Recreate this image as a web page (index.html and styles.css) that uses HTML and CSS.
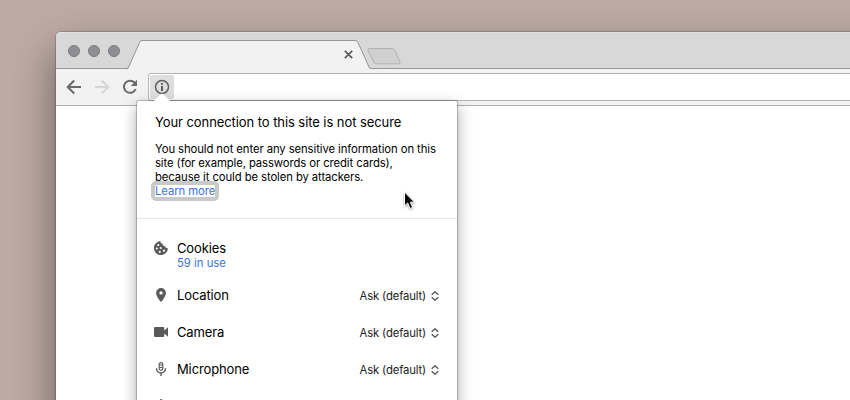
FILE: index.html
```html
<!DOCTYPE html>
<html lang="en">

<head>
    <meta charset="UTF-8">
    <meta name="viewport" content="width=device-width, initial-scale=1.0">
    <title>Site information</title>
    <link rel="stylesheet" href="styles.css">
</head>

<body>
    <div class="browser">
        <!-- Tab strip -->
        <header class="tab-strip">
            <div class="window-buttons">
                <span></span>
                <span></span>
                <span></span>
            </div>
            <div class="tab">
                <svg class="tab-shape" width="244" height="29" viewBox="0 0 244 29">
                    <path d="M0.5 29 L1.5 28.5 L12.6 2.5 Q13.3 0.5 15 0.5 H228 Q230 0.5 231 2.5 L242 27 Q242.5 28.5 244 28.5 V29 Z" fill="#f2f2f2"/>
                    <path d="M0 28.5 Q1 28.5 1.6 27 L12.6 2.5 Q13.3 0.5 15 0.5 H228 Q230 0.5 231 2.5 L242 27 Q242.5 28.5 244 28.5" fill="none" stroke="#969698"/>
                </svg>
                <svg class="tab-close" width="9" height="9" viewBox="0 0 9 9">
                    <path d="M0.8 0.8 L8.2 8.2 M8.2 0.8 L0.8 8.2" stroke="#5a5a5a" stroke-width="1.7"/>
                </svg>
            </div>
            <svg class="new-tab" width="34" height="17" viewBox="0 0 34 17">
                <path d="M2.5 0.5 H25 Q27 0.5 27.8 2 L33 14 Q33.6 15.8 32 15.8 H9.5 Q7.5 15.8 6.7 14 L1 2.3 Q0.4 0.5 2.5 0.5 Z" fill="#d0d0d0" stroke="#b2b2b2"/>
            </svg>
        </header>

        <!-- Toolbar -->
        <nav class="toolbar">
            <svg class="icon-back" width="16" height="16" viewBox="0 0 16 16">
                <path d="M15 8 H2 M8.2 1.5 L1.7 8 L8.2 14.5" fill="none" stroke="#6a6a6a" stroke-width="2"/>
            </svg>
            <svg class="icon-forward" width="16" height="16" viewBox="0 0 16 16">
                <path d="M1 8 H14 M7.8 1.5 L14.3 8 L7.8 14.5" fill="none" stroke="#d6d6d6" stroke-width="2"/>
            </svg>
            <svg class="icon-reload" width="16" height="16" viewBox="0 0 16 16">
                <path d="M12.6 3.7 A6.1 6.1 0 1 0 13.7 10" fill="none" stroke="#6a6a6a" stroke-width="2"/>
                <path d="M15 0.8 V7 H8.8 Z" fill="#6a6a6a"/>
            </svg>
            <div class="omnibox">
                <div class="info-button">
                    <svg width="16" height="16" viewBox="0 0 16 16">
                        <circle cx="8" cy="8" r="6.5" fill="none" stroke="#606060" stroke-width="1.5"/>
                        <path d="M8 7 V12 M8 4 V5.7" stroke="#505050" stroke-width="1.8"/>
                    </svg>
                </div>
            </div>
        </nav>

        <main class="page"></main>
    </div>

    <!-- Site info popup -->
    <section class="popup">
        <svg class="popup-arrow" width="18" height="9" viewBox="0 0 18 9">
            <path d="M0 9 L8 1 Q9 0 10 1 L18 9 Z" fill="#fff"/>
        </svg>
        <div class="summary">
            <h1>Your connection to this site is not secure</h1>
            <p>You should not enter any sensitive information on this<br>
                site (for example, passwords or credit cards),<br>
                because it could be stolen by attackers.</p>
            <a href="#" class="learn-more">Learn more</a>
        </div>
        <ul class="permissions">
            <li class="cookies">
                <svg class="perm-icon" width="14" height="14" viewBox="0 0 14 14">
                    <path d="M6.3 0.1 A7 7 0 1 0 13.9 7.2 C12.7 7.5 11.4 6.8 11.2 5.3 C9.6 5.5 8.4 4.3 8.7 2.9 C7.2 2.8 6.3 1.5 6.3 0.1 Z" fill="#5a5a5a"/>
                    <circle cx="4.3" cy="4" r="1.1" fill="#fff"/>
                    <circle cx="2.8" cy="7.6" r="1" fill="#fff"/>
                    <circle cx="6.7" cy="7" r="1" fill="#fff"/>
                    <circle cx="5.8" cy="10.8" r="1.1" fill="#fff"/>
                    <circle cx="10" cy="9.7" r="1.1" fill="#fff"/>
                </svg>
                <div class="perm-text">
                    <span class="perm-name">Cookies</span>
                    <a href="#" class="in-use">59 in use</a>
                </div>
            </li>
            <li>
                <svg class="perm-icon" width="14" height="14" viewBox="0 0 14 14">
                    <path d="M7 0 A4.9 4.9 0 0 0 2.1 4.9 C2.1 8.5 7 14 7 14 C7 14 11.9 8.5 11.9 4.9 A4.9 4.9 0 0 0 7 0 Z M7 3.2 A1.7 1.7 0 1 1 7 6.6 A1.7 1.7 0 1 1 7 3.2 Z" fill="#5a5a5a" fill-rule="evenodd"/>
                </svg>
                <span class="perm-name">Location</span>
                <div class="perm-value">
                    <span>Ask (default)</span>
                    <svg width="8" height="10" viewBox="0 0 8 10">
                        <path d="M0.7 3.8 L4 0.8 L7.3 3.8 M0.7 6.2 L4 9.2 L7.3 6.2" fill="none" stroke="#505050" stroke-width="1.3"/>
                    </svg>
                </div>
            </li>
            <li>
                <svg class="perm-icon" width="14" height="14" viewBox="0 0 14 14">
                    <path d="M1.2 2 H9.2 Q10.3 2 10.3 3.2 V5.5 L14 2.3 V11.7 L10.3 8.5 V10.8 Q10.3 12 9.2 12 H1.2 Q0 12 0 10.8 V3.2 Q0 2 1.2 2 Z" fill="#5a5a5a"/>
                </svg>
                <span class="perm-name">Camera</span>
                <div class="perm-value">
                    <span>Ask (default)</span>
                    <svg width="8" height="10" viewBox="0 0 8 10">
                        <path d="M0.7 3.8 L4 0.8 L7.3 3.8 M0.7 6.2 L4 9.2 L7.3 6.2" fill="none" stroke="#505050" stroke-width="1.3"/>
                    </svg>
                </div>
            </li>
            <li>
                <svg class="perm-icon" width="14" height="14" viewBox="0 0 14 14">
                    <rect x="5.2" y="0.6" width="3.6" height="7.8" rx="1.8" fill="#fff" stroke="#5a5a5a" stroke-width="1.2"/>
                    <path d="M5.5 3 H8.5 M5.5 5.5 H8.5" stroke="#5a5a5a"/>
                    <path d="M2.5 6.3 C2.5 12.5 11.5 12.5 11.5 6.3 M7 11 V14" fill="none" stroke="#5a5a5a" stroke-width="1.4"/>
                </svg>
                <span class="perm-name">Microphone</span>
                <div class="perm-value">
                    <span>Ask (default)</span>
                    <svg width="8" height="10" viewBox="0 0 8 10">
                        <path d="M0.7 3.8 L4 0.8 L7.3 3.8 M0.7 6.2 L4 9.2 L7.3 6.2" fill="none" stroke="#505050" stroke-width="1.3"/>
                    </svg>
                </div>
            </li>
            <li>
                <svg class="perm-icon" width="14" height="14" viewBox="0 0 14 14">
                    <path d="M7 0 a1.2 1.2 0 0 1 1.2 1.2 C10.5 1.8 11.5 3.5 11.5 6 V9.5 L13 11 V12 H1 V11 L2.5 9.5 V6 C2.5 3.5 3.5 1.8 5.8 1.2 A1.2 1.2 0 0 1 7 0 Z" fill="#5a5a5a"/>
                </svg>
            </li>
        </ul>
    </section>

    <!-- Mouse pointer -->
    <svg class="cursor" width="14" height="20" viewBox="0 0 14 20">
        <path d="M1.5 1 V15 L4.700 12 L7 17.500 L9.600 16.400 L7.300 11.200 H11.500 Z" fill="#000" stroke="#fff"/>
    </svg>
</body>

</html>
```

FILE: styles.css
```css
/* Base Styles */
* {
    margin: 0;
    padding: 0;
    box-sizing: border-box;
}

body {
    width: 850px;
    height: 400px;
    overflow: hidden;
    position: relative;
    padding: 32px 0 0 56px;
    background-color: #bcaaa3;
    font-family: Inter, "Liberation Sans", sans-serif;
    color: #000;
}

svg {
    display: block;
    flex-shrink: 0;
}

a {
    color: #3b74de;
    text-decoration: none;
}

/* Browser Window */
.browser {
    width: 900px;
    height: 500px;
    display: flex;
    flex-direction: column;
    background-color: #fff;
    border-radius: 5px 0 0 0;
    box-shadow: 0 0 1px 1px rgba(0, 0, 0, 0.18), 0 20px 40px rgba(0, 0, 0, 0.45);
}

.tab-strip {
    height: 37px;
    display: flex;
    background-color: #d8d8d8;
    border-bottom: 1px solid #969698;
    border-radius: 5px 0 0 0;
    box-shadow: inset 0 1px 0 #e0e0e0;
}

.window-buttons {
    display: flex;
    gap: 8px;
    padding: 13px 0 0 12px;
    width: 71px;
}

.window-buttons span {
    width: 12px;
    height: 12px;
    border-radius: 50%;
    background-color: #8e8d92;
    border: 1px solid #79787c;
}

.tab {
    height: 29px;
    margin-top: 8px;
    display: flex;
    align-items: center;
}

.tab-close {
    margin-left: -27px;
    margin-right: 18px;
}

.new-tab {
    margin: 16px 0 0 -4px;
}

/* Toolbar */
.toolbar {
    height: 37px;
    display: flex;
    align-items: center;
    padding-left: 10px;
    background-color: #f2f2f2;
    border-bottom: 1px solid #b0b0b0;
}

.icon-forward,
.icon-reload {
    margin-left: 12px;
}

.omnibox {
    flex: 1;
    height: 28px;
    margin-left: 10px;
    padding: 1px;
    background-color: #fff;
    border: 1px solid #b4b4b4;
    border-radius: 3px;
}

.info-button {
    width: 24px;
    height: 24px;
    display: flex;
    align-items: center;
    justify-content: center;
    background-color: #dedede;
    border-radius: 2px;
}

.page {
    flex: 1;
}

/* Site Info Popup */
.popup {
    position: absolute;
    left: 137px;
    top: 101px;
    width: 320px;
    height: 330px;
    background-color: #fff;
    border-radius: 2px;
    box-shadow: 0 0 1px 1px rgba(0, 0, 0, 0.24), 0 6px 16px rgba(0, 0, 0, 0.35);
}

.popup-arrow {
    position: absolute;
    left: 16px;
    top: -8px;
}

.summary {
    height: 118px;
    padding: 13px 0 0 18px;
    border-bottom: 1px solid #e6e6e6;
    font-size: 11.3px;
    line-height: 14px;
    letter-spacing: -0.09px;
    white-space: nowrap;
}

.summary h1 {
    margin-bottom: 12px;
    font-size: 13px;
    font-weight: 400;
    line-height: 16px;
    letter-spacing: -0.075px;
}

.learn-more {
    display: block;
    width: 60px;
    height: 12px;
    margin-top: 1px;
    line-height: 12px;
    border-radius: 1px;
    outline: 4px solid #c8c9cb;
}

/* Permission Rows */
.permissions {
    list-style: none;
    padding: 10px 18px 0 17px;
}

.permissions li {
    height: 37px;
    display: flex;
    align-items: center;
}

.permissions .cookies {
    height: 47px;
    align-items: flex-start;
    padding-top: 11px;
}

.cookies .perm-icon {
    margin-top: 1px;
}

.perm-text {
    display: flex;
    flex-direction: column;
}

.perm-name {
    margin-left: 9px;
    font-size: 13px;
    line-height: 16px;
    letter-spacing: -0.13px;
}

.in-use {
    margin-left: 9px;
    font-size: 11.3px;
    line-height: 14px;
}

.perm-value {
    margin-left: auto;
    padding-top: 2px;
    display: flex;
    align-items: center;
    gap: 5px;
    font-size: 11.3px;
    line-height: 14px;
    letter-spacing: -0.15px;
    color: #222;
}

/* Mouse Pointer */
.cursor {
    position: absolute;
    left: 403px;
    top: 191px;
    filter: drop-shadow(0 1px 1px rgba(0, 0, 0, 0.35));
}
```
